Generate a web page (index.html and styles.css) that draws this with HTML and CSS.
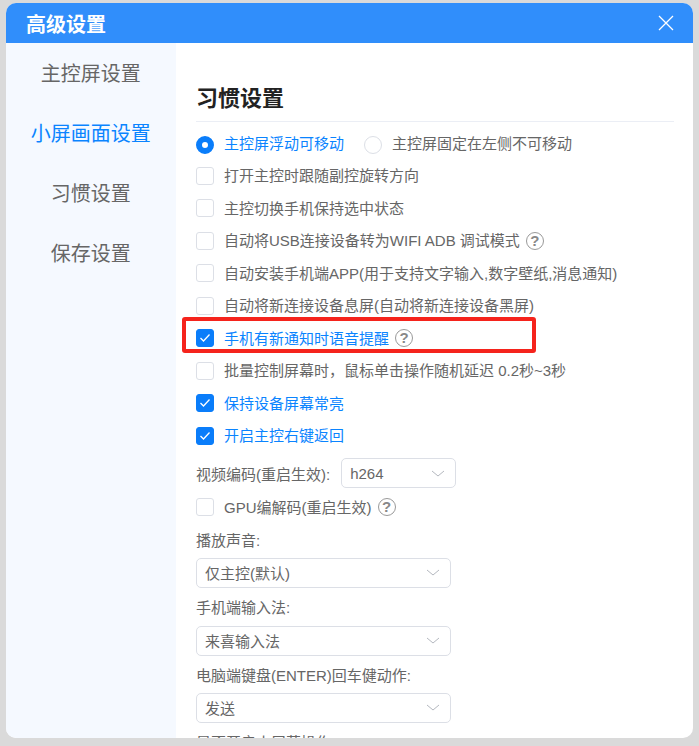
FILE: index.html
```html
<!DOCTYPE html>
<html lang="zh-CN">
<head>
<meta charset="utf-8">
<title>高级设置</title>
<link rel="stylesheet" href="styles.css">
</head>
<body>
<div class="dialog">
  <header class="head">
    <span class="head-title">高级设置</span>
    <svg class="close" width="16" height="16" viewBox="0 0 16 16"><path d="M1 1L15 15M15 1L1 15" stroke="#fff" stroke-width="1.3" fill="none"/></svg>
  </header>
  <div class="body">
    <nav class="side">
      <a class="side-item">主控屏设置</a>
      <a class="side-item active">小屏画面设置</a>
      <a class="side-item">习惯设置</a>
      <a class="side-item">保存设置</a>
    </nav>
    <main class="main">
      <h2 class="title">习惯设置</h2>
      <div class="row first">
        <span class="radio on"></span><span class="txt blue">主控屏浮动可移动</span>
        <span class="radio off"></span><span class="txt">主控屏固定在左侧不可移动</span>
      </div>
      <div class="row"><span class="box"></span><span class="txt">打开主控时跟随副控旋转方向</span></div>
      <div class="row"><span class="box"></span><span class="txt">主控切换手机保持选中状态</span></div>
      <div class="row"><span class="box"></span><span class="txt">自动将USB连接设备转为WIFI ADB 调试模式</span><span class="help">?</span></div>
      <div class="row"><span class="box"></span><span class="txt">自动安装手机端APP(用于支持文字输入,数字壁纸,消息通知)</span></div>
      <div class="row"><span class="box"></span><span class="txt">自动将新连接设备息屏(自动将新连接设备黑屏)</span></div>
      <div class="row"><span class="box checked"><svg width="12" height="10" viewBox="0 0 12 10"><path d="M1.5 5L4.5 8L10.5 1.5" stroke="#fff" stroke-width="1.3" fill="none"/></svg></span><span class="txt blue">手机有新通知时语音提醒</span><span class="help">?</span></div>
      <div class="row"><span class="box"></span><span class="txt">批量控制屏幕时，鼠标单击操作随机延迟 0.2秒~3秒</span></div>
      <div class="row"><span class="box checked"><svg width="12" height="10" viewBox="0 0 12 10"><path d="M1.5 5L4.5 8L10.5 1.5" stroke="#fff" stroke-width="1.3" fill="none"/></svg></span><span class="txt blue">保持设备屏幕常亮</span></div>
      <div class="row"><span class="box checked"><svg width="12" height="10" viewBox="0 0 12 10"><path d="M1.5 5L4.5 8L10.5 1.5" stroke="#fff" stroke-width="1.3" fill="none"/></svg></span><span class="txt blue">开启主控右键返回</span></div>
      <div class="inline-field">
        <span class="label">视频编码(重启生效):</span>
        <div class="select short"><span>h264</span><svg class="chev" width="14" height="7" viewBox="0 0 14 7"><path d="M1 1L7 6L13 1" stroke="#b4b8bf" stroke-width="1" fill="none"/></svg></div>
      </div>
      <div class="row gpu"><span class="box"></span><span class="txt">GPU编解码(重启生效)</span><span class="help">?</span></div>
      <div class="label stack">播放声音:</div>
      <div class="select wide"><span>仅主控(默认)</span><svg class="chev" width="14" height="7" viewBox="0 0 14 7"><path d="M1 1L7 6L13 1" stroke="#b4b8bf" stroke-width="1" fill="none"/></svg></div>
      <div class="label stack">手机端输入法:</div>
      <div class="select wide"><span>来喜输入法</span><svg class="chev" width="14" height="7" viewBox="0 0 14 7"><path d="M1 1L7 6L13 1" stroke="#b4b8bf" stroke-width="1" fill="none"/></svg></div>
      <div class="label stack">电脑端键盘(ENTER)回车健动作:</div>
      <div class="select wide"><span>发送</span><svg class="chev" width="14" height="7" viewBox="0 0 14 7"><path d="M1 1L7 6L13 1" stroke="#b4b8bf" stroke-width="1" fill="none"/></svg></div>
      <div class="label stack">是否开启小屏幕操作</div>
    </main>
  </div>
</div>
<div class="highlight"></div>
</body>
</html>
```
FILE: styles.css
```css
* { box-sizing: border-box; }
html, body { height: 100%; }
body {
  margin: 0;
  padding: 3px 6px 8px;
  height: 746px;
  overflow: hidden;
  background: #dadada;
  font-family: "Liberation Sans", "Noto Sans CJK SC", sans-serif;
  color: #666;
}
.dialog {
  height: 735px;
  border-radius: 10px;
  overflow: hidden;
  background: #fff;
  display: flex;
  flex-direction: column;
}
.head {
  height: 40px;
  flex: none;
  background: #308efb;
  display: flex;
  align-items: center;
  justify-content: space-between;
  padding: 0 19px 0 20px;
}
.head-title { color: #fff; font-size: 20px; font-weight: 700; }
.body { flex: 1; display: flex; min-height: 0; }
.side {
  width: 169.5px;
  flex: none;
  background: #f5f9ff;
  display: flex;
  flex-direction: column;
  align-items: center;
  padding-top: 1px;
}
.side-item {
  height: 60px;
  line-height: 60px;
  font-size: 20px;
  color: #666;
}
.side-item.active { color: #0a84ff; }
.main {
  flex: 1;
  padding: 38px 19px 0 20.5px;
  overflow: hidden;
}
.title {
  margin: 0;
  height: 41px;
  font-size: 22px;
  line-height: 36px;
  font-weight: 700;
  color: #222;
  border-bottom: 1px solid #ebeef5;
}
.row {
  height: 32.5px;
  display: flex;
  align-items: center;
  font-size: 15px;
}
.row.first { margin-top: 5px; }
.txt { margin-left: 10px; margin-bottom: 2px; white-space: nowrap; color: #666; }
.txt.blue { color: #0a84ff; }
.box {
  width: 18px;
  height: 18px;
  flex: none;
  border: 1px solid #dcdfe6;
  border-radius: 3px;
  background: #fff;
  display: flex;
  align-items: center;
  justify-content: center;
}
.box.checked { background: #0a7dfa; border-color: #0a7dfa; }
.radio {
  width: 18px;
  height: 18px;
  flex: none;
  border-radius: 50%;
  margin-top: 3px;
}
.radio.on { border: 6px solid #0a7dfa; background: #fff; }
.radio.off { border: 1px solid #dcdfe6; margin-left: 20px; }
.help {
  width: 18px;
  height: 18px;
  margin-left: 6px;
  flex: none;
  border: 1.5px solid #999;
  border-radius: 50%;
  color: #888;
  font-size: 15px;
  font-weight: 700;
  line-height: 15px;
  text-align: center;
}
.label { font-size: 15px; color: #666; white-space: nowrap; }
.inline-field {
  display: flex;
  align-items: center;
  gap: 11px;
  margin-top: 6px;
  height: 30px;
}
.select {
  height: 30px;
  border: 1px solid #dcdfe6;
  border-radius: 5px;
  background: #fff;
  display: flex;
  align-items: center;
  justify-content: space-between;
  padding: 0 10px 0 8px;
  font-size: 15px;
  color: #666;
}
.select.short { width: 115px; }
.select.wide { width: 255px; }
.gpu { margin-top: 3px; }
.stack { height: 35px; line-height: 34px; }
.gpu + .stack { height: 34px; }
.select.wide + .stack { height: 38px; line-height: 40px; }
.select.wide + .stack + .select.wide + .stack { height: 37px; }
.highlight {
  position: absolute;
  left: 182px;
  top: 317px;
  width: 354px;
  height: 36px;
  border: 4px solid #f5231c;
  border-radius: 3px;
}
```
